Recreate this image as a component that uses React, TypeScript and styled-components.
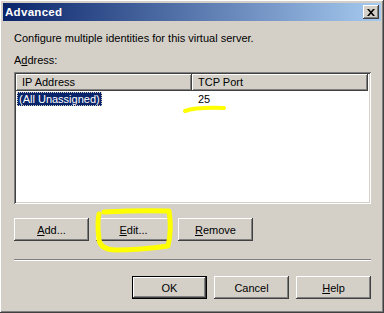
import { createGlobalStyle, styled } from 'styled-components';

const GlobalStyle = createGlobalStyle`
  html, body {
    margin: 0;
    padding: 0;
    background: #d4d0c8;
  }
  * {
    box-sizing: border-box;
  }
`;

const raised = `
  box-shadow:
    inset -1px -1px 0 #404040,
    inset 1px 1px 0 #ffffff,
    inset -2px -2px 0 #808080,
    inset 2px 2px 0 #d4d0c8;
`;

export default function App() {
  return (
    <>
      <GlobalStyle />
      <St.Window>
        <St.TitleBar>
          <St.Title>Advanced</St.Title>
          <St.CloseButton>
            <svg width='8' height='7' viewBox='0 0 8 7'>
              <path d='M0 0h2l2 2.2L6 0h2L5 3.5 8 7H6L4 4.8 2 7H0l3-3.5z' fill='#000' />
            </svg>
          </St.CloseButton>
        </St.TitleBar>

        <St.Body>
          <St.Text>Configure multiple identities for this virtual server.</St.Text>
          <St.Label>
            A<u>d</u>dress:
          </St.Label>

          <St.ListBox>
            <St.Header>
              <St.HeaderCell $width={176}>IP Address</St.HeaderCell>
              <St.HeaderCell $width={176}>TCP Port</St.HeaderCell>
            </St.Header>
            <St.Row>
              <St.Cell $width={176}>
                <St.Selected>(All Unassigned)</St.Selected>
              </St.Cell>
              <St.Cell $width={176}>25</St.Cell>
            </St.Row>
          </St.ListBox>

          <St.ButtonRow>
            <St.Button>
              <u>A</u>dd...
            </St.Button>
            <St.Button>
              <u>E</u>dit...
            </St.Button>
            <St.Button>
              <u>R</u>emove
            </St.Button>
          </St.ButtonRow>

          <St.Separator />

          <St.FooterRow>
            <St.Button $default>OK</St.Button>
            <St.Button>Cancel</St.Button>
            <St.Button>
              <u>H</u>elp
            </St.Button>
          </St.FooterRow>
        </St.Body>

        <St.Marker width='384' height='313' viewBox='0 0 384 313'>
          <path
            d='M185 111 Q 196 107 224 108'
            stroke='#ffff00'
            strokeWidth='4'
            fill='none'
            strokeLinecap='round'
          />
          <path
            d='M104 212 Q 140 210 169 211 Q 172 230 168 246 Q 140 250 116 250 Q 101 250 99 240 Q 97 222 99 214'
            stroke='#ffff00'
            strokeWidth='5'
            fill='none'
            strokeLinecap='round'
            strokeLinejoin='round'
          />
        </St.Marker>
      </St.Window>
    </>
  );
}

const St = {
  Window: styled.div`
    position: relative;
    width: 384px;
    height: 313px;
    padding: 3px;
    display: flex;
    flex-direction: column;
    background: #d4d0c8;
    font-family: 'Liberation Sans', Arial, sans-serif;
    font-size: 11px;
    color: #000;
    ${raised}
  `,

  TitleBar: styled.div`
    height: 18px;
    display: flex;
    align-items: center;
    justify-content: space-between;
    padding: 0 2px 0 2px;
    background: linear-gradient(to right, #0a246a, #a6caf0);
  `,

  Title: styled.span`
    font-family: 'Liberation Sans', Arial, sans-serif;
    font-weight: bold;
    font-size: 11.5px;
    color: #fff;
    letter-spacing: 0.3px;
  `,

  CloseButton: styled.div`
    width: 16px;
    height: 14px;
    display: flex;
    align-items: center;
    justify-content: center;
    background: #d4d0c8;
    ${raised}
  `,

  Body: styled.div`
    display: flex;
    flex-direction: column;
    padding: 11px 10px 0 11px;
  `,

  Text: styled.div`
    line-height: 13px;
  `,

  Label: styled.div`
    line-height: 13px;
    margin-top: 9px;
  `,

  ListBox: styled.div`
    margin-top: 5px;
    height: 132px;
    padding: 2px;
    background: #fff;
    box-shadow:
      inset 1px 1px 0 #808080,
      inset -1px -1px 0 #ffffff,
      inset 2px 2px 0 #404040,
      inset -2px -2px 0 #d4d0c8;
  `,

  Header: styled.div`
    display: flex;
    height: 17px;
  `,

  HeaderCell: styled.div<{ $width: number }>`
    width: ${({ $width }) => $width}px;
    height: 17px;
    line-height: 16px;
    padding-left: 6px;
    background: #d4d0c8;
    ${raised}
  `,

  Row: styled.div`
    display: flex;
    height: 14px;
    margin-top: 1px;
  `,

  Cell: styled.div<{ $width: number }>`
    width: ${({ $width }) => $width}px;
    line-height: 14px;
    padding-left: 6px;
    &:first-child {
      padding-left: 1px;
    }
  `,

  Selected: styled.span`
    display: inline-block;
    padding: 0 2px;
    background: #0a246a;
    color: #fff;
    outline: 1px dotted #d4d0c8;
    outline-offset: -1px;
  `,

  ButtonRow: styled.div`
    display: flex;
    gap: 7px;
    margin-top: 14px;
  `,

  FooterRow: styled.div`
    display: flex;
    justify-content: flex-end;
    gap: 7px;
    margin-top: 15px;
  `,

  Button: styled.div<{ $default?: boolean }>`
    width: 75px;
    height: 23px;
    display: flex;
    align-items: center;
    justify-content: center;
    background: #d4d0c8;
    ${({ $default }) =>
      $default
        ? `
    box-shadow:
      inset 0 0 0 1px #000,
      inset -2px -2px 0 #404040,
      inset 2px 2px 0 #ffffff,
      inset -3px -3px 0 #808080;
    `
        : raised}
  `,

  Separator: styled.div`
    margin-top: 18px;
    height: 2px;
    border-top: 1px solid #808080;
    border-bottom: 1px solid #ffffff;
  `,

  Marker: styled.svg`
    position: absolute;
    left: 0;
    top: 0;
    pointer-events: none;
  `,
};
